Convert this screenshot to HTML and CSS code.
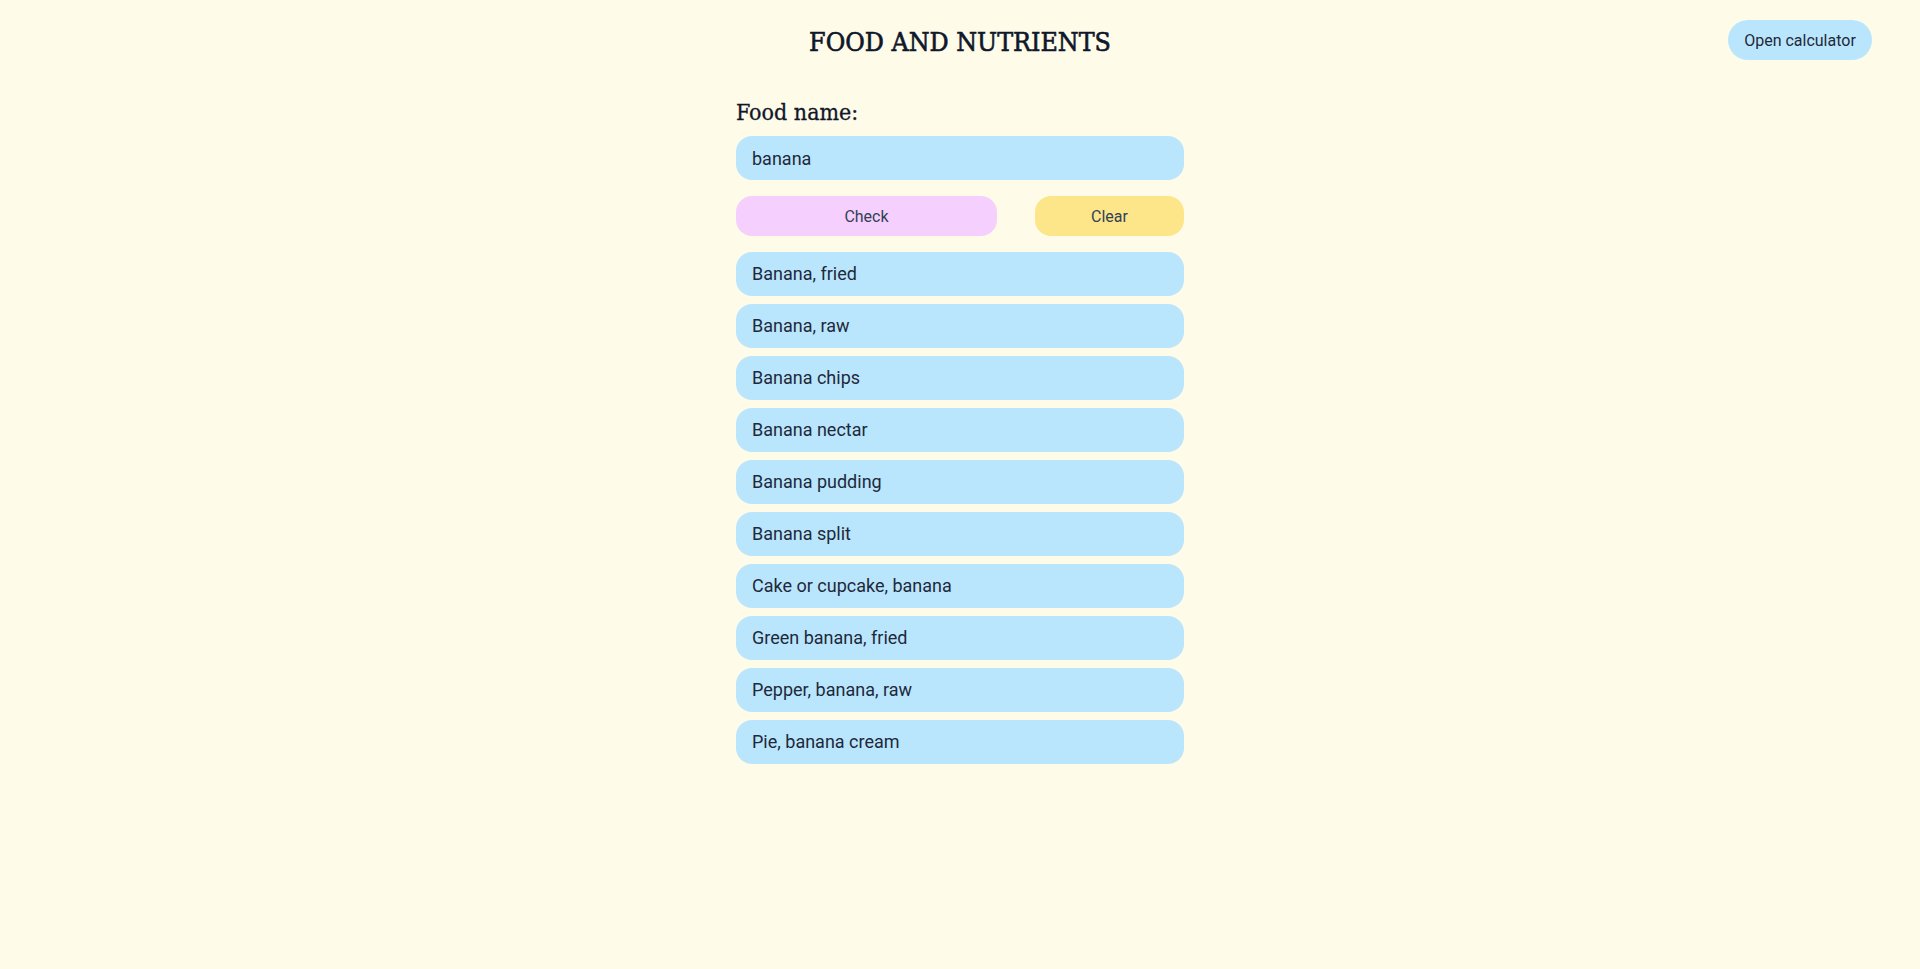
FILE: index.html
```html
<!DOCTYPE html>
<html lang="en">
<head>
<meta charset="utf-8">
<title>Food and Nutrients</title>
<link rel="stylesheet" href="styles.css">
</head>
<body>
<header class="header">
  <div class="spacer"></div>
  <h1 class="title">FOOD AND NUTRIENTS</h1>
  <div class="actions"><button class="calc-btn">Open calculator</button></div>
</header>
<main class="panel">
  <label class="label" for="food">Food name:</label>
  <input class="field" id="food" type="text" value="banana">
  <div class="buttons">
    <button class="btn btn-check">Check</button>
    <button class="btn btn-clear">Clear</button>
  </div>
  <ul class="results">
    <li class="item">Banana, fried</li>
    <li class="item">Banana, raw</li>
    <li class="item">Banana chips</li>
    <li class="item">Banana nectar</li>
    <li class="item">Banana pudding</li>
    <li class="item">Banana split</li>
    <li class="item">Cake or cupcake, banana</li>
    <li class="item">Green banana, fried</li>
    <li class="item">Pepper, banana, raw</li>
    <li class="item">Pie, banana cream</li>
  </ul>
</main>
</body>
</html>
```
FILE: styles.css
```css
html, body {
  margin: 0;
  padding: 0;
  background: #fffbe9;
  color: #1e293b;
  font-family: Roboto, "Liberation Sans", sans-serif;
}
.header {
  display: grid;
  grid-template-columns: 1fr auto 1fr;
  align-items: center;
  padding: 20px 48px 0 48px;
  height: 40px;
}
.title {
  margin: 0;
  font-family: "DejaVu Serif Condensed", "DejaVu Serif", serif;
  font-weight: normal;
  font-size: 26.5px;
  line-height: 40px;
  color: #0f172a;
  -webkit-text-stroke: 0.6px #0f172a;
  position: relative;
  top: 2px;
}
.actions {
  display: flex;
  justify-content: flex-end;
}
.calc-btn {
  width: 144px;
  height: 40px;
  border: none;
  border-radius: 20px;
  background: #bae6fd;
  color: #1e293b;
  font-family: Roboto, "Liberation Sans", sans-serif;
  font-size: 16px;
  padding: 0;
}
.panel {
  width: 448px;
  margin: 38px auto 0;
  display: flex;
  flex-direction: column;
}
.label {
  font-family: "DejaVu Serif Condensed", "DejaVu Serif", serif;
  font-size: 23px;
  line-height: 28px;
  color: #0f172a;
  -webkit-text-stroke: 0.3px #0f172a;
  margin-bottom: 10px;
}
.field {
  box-sizing: border-box;
  height: 44px;
  width: 100%;
  border: none;
  outline: none;
  border-radius: 16px;
  background: #bae6fd;
  padding: 0 16px;
  font-family: Roboto, "Liberation Sans", sans-serif;
  font-size: 18px;
  color: #1e293b;
}
.buttons {
  display: flex;
  gap: 38px;
  margin-top: 16px;
}
.btn {
  height: 40px;
  border: none;
  border-radius: 16px;
  font-family: Roboto, "Liberation Sans", sans-serif;
  font-size: 16px;
  color: #334155;
  padding: 0;
}
.btn-check {
  width: 261px;
  background: #f5d0fe;
}
.btn-clear {
  width: 149px;
  background: #fde68a;
}
.results {
  list-style: none;
  margin: 16px 0 0;
  padding: 0;
  display: flex;
  flex-direction: column;
  gap: 8px;
}
.item {
  box-sizing: border-box;
  height: 44px;
  display: flex;
  align-items: center;
  padding: 0 16px 1px;
  border-radius: 16px;
  background: #bae6fd;
  font-size: 18px;
  color: #1e293b;
}
```
